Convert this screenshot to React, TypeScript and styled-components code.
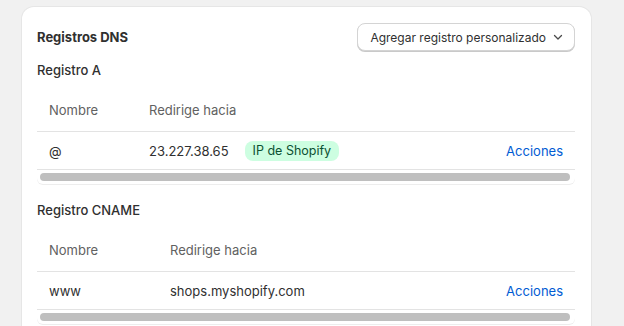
import styled, { createGlobalStyle } from "styled-components";

interface IRecord {
  name: string;
  target: string;
  badge?: string;
}

interface ISection {
  title: string;
  firstCol: number;
  records: IRecord[];
}

const GlobalStyle = createGlobalStyle`
  html, body {
    margin: 0;
    padding: 0;
    background: #f1f1f1;
    overflow: hidden;
  }
  body {
    font-family: Inter, "Noto Sans", sans-serif;
    font-size: 13px;
    color: #303030;
  }
`;

const Page = styled.div`
  padding: 7px 0 0 22px;
`;

const Card = styled.div`
  width: 538px;
  min-height: 400px;
  background: #ffffff;
  border-radius: 12px;
  box-shadow: 0 0 0 1px #e6e6e6, 0 1px 0 0 rgba(26, 26, 26, 0.07);
  padding: 16px 16px 16px 15px;
  display: flex;
  flex-direction: column;
`;

const Header = styled.div`
  display: flex;
  align-items: center;
  justify-content: space-between;
`;

const Title = styled.h2`
  margin: 0;
  font-size: 13px;
  font-weight: 650;
  line-height: 20px;
`;

const Button = styled.button`
  display: flex;
  align-items: center;
  gap: 6px;
  height: 28px;
  padding: 0 10px 0 12px;
  font-family: Inter, "Noto Sans", sans-serif;
  font-size: 12px;
  font-weight: 400;
  color: #303030;
  background: #ffffff;
  border: 1px solid #d4d4d4;
  border-radius: 8px;
  box-shadow: 0 1px 0 0 #c9c9c9;
  cursor: pointer;
`;

const Section = styled.section`
  display: flex;
  flex-direction: column;
  margin-top: 9px;

  & + & {
    margin-top: 16px;
  }
`;

const SubTitle = styled.h3`
  margin: 0;
  font-size: 13px;
  font-weight: 500;
  line-height: 20px;
`;

const Table = styled.div`
  margin-top: 8px;
  display: flex;
  flex-direction: column;
`;

const Row = styled.div<{ $head?: boolean }>`
  display: flex;
  align-items: center;
  height: ${(p) => (p.$head ? "43px" : "37px")};
  border-bottom: 1px solid #e3e3e3;
  color: ${(p) => (p.$head ? "#616161" : "#303030")};
`;

const Cell = styled.div<{ $width?: number }>`
  display: flex;
  align-items: center;
  gap: 16px;
  padding-left: 12px;
  box-sizing: border-box;
  flex: ${(p) => (p.$width ? `0 0 ${p.$width}px` : "1 1 auto")};
`;

const Badge = styled.span`
  display: inline-flex;
  align-items: center;
  height: 20px;
  padding: 0 8px;
  border-radius: 8px;
  background: #cdfee1;
  color: #0c5132;
  font-size: 12.5px;
  font-weight: 400;
`;

const ActionLink = styled.a`
  margin-left: auto;
  padding-right: 12px;
  color: #005bd3;
  text-decoration: none;
  cursor: pointer;
`;

const ScrollTrack = styled.div`
  height: 14px;
  padding: 3px 5px 0 3px;
  box-sizing: border-box;
  border-radius: 0 0 6px 6px;
  box-shadow: 0 1px 0 0 #ededed;
`;

const ScrollThumb = styled.div`
  height: 8px;
  border-radius: 4px;
  background: #bfbfbf;
`;

const sections: ISection[] = [
  {
    title: "Registro A",
    firstCol: 100,
    records: [{ name: "@", target: "23.227.38.65", badge: "IP de Shopify" }],
  },
  {
    title: "Registro CNAME",
    firstCol: 121,
    records: [{ name: "www", target: "shops.myshopify.com" }],
  },
];

const Chevron = () => (
  <svg width="12" height="12" viewBox="0 0 12 12" fill="none">
    <path
      d="M2.5 4.5 6 8 9.5 4.5"
      stroke="#4a4a4a"
      strokeWidth="1.3"
      strokeLinecap="round"
      strokeLinejoin="round"
    />
  </svg>
);

const App = () => {
  return (
    <Page>
      <GlobalStyle />
      <Card>
        <Header>
          <Title>Registros DNS</Title>
          <Button>
            Agregar registro personalizado
            <Chevron />
          </Button>
        </Header>
        {sections.map((section) => (
          <Section key={section.title}>
            <SubTitle>{section.title}</SubTitle>
            <Table>
              <Row $head>
                <Cell $width={section.firstCol}>Nombre</Cell>
                <Cell>Redirige hacia</Cell>
              </Row>
              {section.records.map((record) => (
                <Row key={record.name}>
                  <Cell $width={section.firstCol}>{record.name}</Cell>
                  <Cell>
                    {record.target}
                    {record.badge && <Badge>{record.badge}</Badge>}
                  </Cell>
                  <ActionLink>Acciones</ActionLink>
                </Row>
              ))}
              <ScrollTrack>
                <ScrollThumb />
              </ScrollTrack>
            </Table>
          </Section>
        ))}
      </Card>
    </Page>
  );
};

export default App;
